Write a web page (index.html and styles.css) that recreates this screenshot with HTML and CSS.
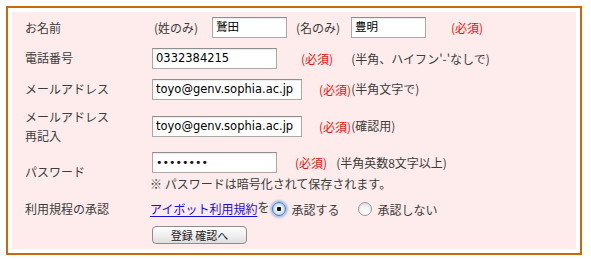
FILE: index.html
```html
<!DOCTYPE html>
<html lang="ja">
<head>
    <meta charset="UTF-8">
    <title>登録</title>
    <link rel="stylesheet" href="styles.css">
</head>
<body>
    <div class="form-box">
        <table class="entry">
            <tr class="row-name">
                <th>お名前</th>
                <td>
                    <span class="pre">(姓のみ)</span><span class="field w-short">鷲田</span><span class="pre pre-2">(名のみ)</span><span class="field w-short">豊明</span><span class="must must-name">(必須)</span>
                </td>
            </tr>
            <tr class="row-tel">
                <th>電話番号</th>
                <td>
                    <span class="field w-mid">0332384215</span><span class="must must-tel">(必須)</span><span class="note note-tel">(半角、ハイフン'-'なしで)</span>
                </td>
            </tr>
            <tr class="row-mail">
                <th>メールアドレス</th>
                <td>
                    <span class="field w-long">toyo@genv.sophia.ac.jp</span><span class="must must-mail">(必須)</span><span class="note">(半角文字で)</span>
                </td>
            </tr>
            <tr class="row-mail2">
                <th>メールアドレス<br>再記入</th>
                <td>
                    <span class="field w-long">toyo@genv.sophia.ac.jp</span><span class="must must-mail">(必須)</span><span class="note">(確認用)</span>
                </td>
            </tr>
            <tr class="row-pass">
                <th>パスワード</th>
                <td>
                    <div><span class="field w-mid dots">&#8226;&#8226;&#8226;&#8226;&#8226;&#8226;&#8226;&#8226;</span><span class="must must-pass">(必須)</span><span class="note note-pass">(半角英数8文字以上)</span></div>
                    <div class="hint">※ パスワードは暗号化されて保存されます。</div>
                </td>
            </tr>
            <tr class="row-agree">
                <th>利用規程の承認</th>
                <td>
                    <a href="#" class="rule-link">アイボット利用規約</a>を<span class="radio checked"></span><span class="choice">承認する</span><span class="radio"></span><span class="choice">承認しない</span>
                </td>
            </tr>
            <tr class="row-submit">
                <th></th>
                <td><button class="confirm">登録 確認へ</button></td>
            </tr>
        </table>
    </div>
</body>
</html>
```

FILE: styles.css
```css
body {
    margin: 0;
    font-family: "Noto Sans CJK JP", sans-serif;
    font-size: 12px;
    color: #3c3c3c;
    background: #fff;
}

.form-box {
    margin: 6px;
    width: 564px;
    padding: 4px;
    border: 2px solid #c9690c;
}

.entry {
    width: 100%;
    border-collapse: collapse;
    background-color: #fdeceb;
}

.entry th {
    width: 125px;
    padding: 0 0 0 13px;
    text-align: left;
    font-weight: normal;
    line-height: 19px;
    vertical-align: middle;
}

.entry td {
    padding: 0;
    vertical-align: middle;
    line-height: 19px;
    white-space: nowrap;
}

.row-name { height: 30px; }
.row-tel { height: 31px; }
.row-mail { height: 31px; }
.row-mail2 { height: 43px; }
.row-pass { height: 49px; }
.row-agree { height: 24px; }
.row-submit { height: 29px; }

.field {
    display: inline-block;
    vertical-align: middle;
    box-sizing: border-box;
    height: 21px;
    margin-left: 2px;
    padding: 0 3px;
    border: 1px solid #a9a9a9;
    border-top-color: #8e8e8e;
    background: #fff;
    box-shadow: inset 0 1px 1px rgba(0, 0, 0, 0.08);
    font-family: "DejaVu Sans", "Noto Sans CJK JP", sans-serif;
    font-size: 11.5px;
    line-height: 19px;
    color: #000;
}

.w-short { width: 75px; }
.w-mid { width: 125px; }
.w-long { width: 150px; }

.dots {
    font-size: 11px;
    letter-spacing: 0;
    color: #111;
}

.pre {
    display: inline-block;
    vertical-align: middle;
    margin-left: 4px;
    width: 56px;
}

.pre-2 {
    margin-left: 9px;
    width: 53px;
}

.must {
    color: #e8100c;
    vertical-align: middle;
}
.must-name { margin-left: 25px; }
.must-tel { margin-left: 24px; }
.must-mail { margin-left: 17px; }
.must-pass { margin-left: 18px; }

.note {
    vertical-align: middle;
}
.note-tel { margin-left: 18px; }
.note-pass { margin-left: 9px; }

.hint {
    margin-top: 3px;
    line-height: 16px;
}

.rule-link {
    color: #1a0dd8;
    text-decoration: underline;
    vertical-align: middle;
}

.row-agree td > span,
.row-agree td {
    vertical-align: middle;
}

.radio {
    display: inline-block;
    vertical-align: middle;
    box-sizing: border-box;
    width: 14px;
    height: 14px;
    margin: 0 5px 0 2px;
    border: 1px solid #9a9a9a;
    border-radius: 50%;
    background: radial-gradient(circle at 50% 70%, #ffffff 0, #f3f3f3 45%, #d2d2d2 100%);
}

.radio.checked {
    margin-left: 3px;
    border-color: #3f78c4;
    background: radial-gradient(circle, #111 0, #111 2px, #f4f8fd 2.5px, #bcd5f2 70%, #6e9fdc 100%);
    box-shadow: 0 0 2px 2px rgba(110, 160, 225, 0.55);
}

.choice {
    margin-right: 17px;
}

.confirm {
    display: block;
    box-sizing: border-box;
    width: 95px;
    height: 18px;
    margin-left: 2px;
    padding: 0;
    border: 1px solid #8c8c8c;
    border-radius: 4px;
    background: linear-gradient(#ffffff, #f0f0f0 50%, #dedede);
    font-family: "Noto Sans CJK JP", sans-serif;
    font-size: 11px;
    line-height: 16px;
    color: #222;
}
```
